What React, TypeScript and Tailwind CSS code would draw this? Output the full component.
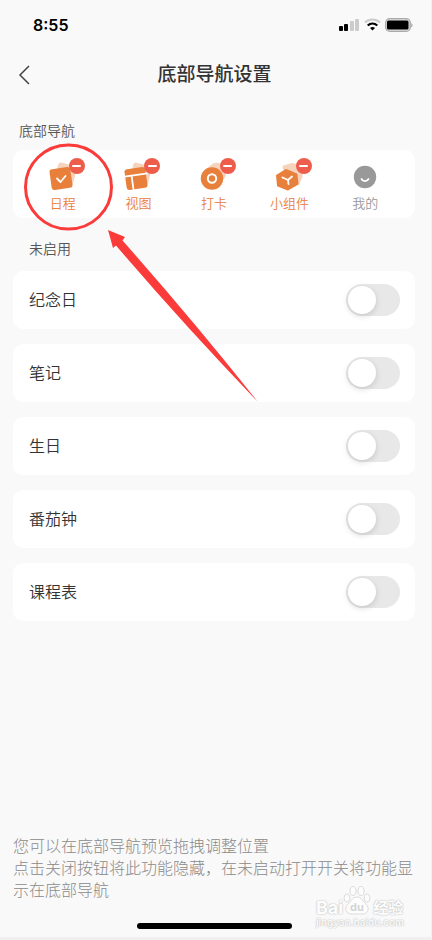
import { useState } from "react";
import type { ReactNode } from "react";

type Tab = { name: string; active: boolean; icon: ReactNode };

const tabs: Tab[] = [
  {
    name: "日程",
    active: true,
    icon: (
      <>
        <rect x="15" y="8" width="19" height="21" rx="3" fill="#f5d3bc" transform="rotate(15 24.5 18.5)" />
        <rect x="9.5" y="12" width="21" height="21" rx="3" fill="#e8803c" transform="rotate(-8 20 22.5)" />
        <path d="M16 22.5l3.500 3.500 5-6" fill="none" stroke="#fff" strokeWidth="1.8" strokeLinecap="round" strokeLinejoin="round" />
      </>
    ),
  },
  {
    name: "视图",
    active: true,
    icon: (
      <>
        <rect x="15" y="8" width="19" height="21" rx="3" fill="#f5d3bc" transform="rotate(15 24.5 18.5)" />
        <g transform="rotate(-8 20 22.5)">
          <rect x="9.5" y="12" width="21" height="21" rx="3" fill="#e8803c" />
          <path d="M9 19h23M16 19v15" fill="none" stroke="#fff" strokeWidth="1.8" />
        </g>
      </>
    ),
  },
  {
    name: "打卡",
    active: true,
    icon: (
      <>
        <path d="M13 14l8-6.500c8-3 16 5 12.500 13L27 30z" fill="#f5d3bc" />
        <circle cx="20" cy="22.5" r="11.2" fill="#e8803c" />
        <circle cx="20" cy="22.5" r="4.2" fill="none" stroke="#fff" strokeWidth="2" />
      </>
    ),
  },
  {
    name: "小组件",
    active: true,
    icon: (
      <>
        <path d="M16 11l8-2.500 9 2 0 10-3 6.500-10-2z" fill="#f5d3bc" stroke="#f5d3bc" strokeWidth="3" strokeLinejoin="round" />
        <path d="M9 19.500l9-5.500 10.500 4.500 1 9.500-9.500 5.500-10-4z" fill="#e8803c" stroke="#e8803c" strokeWidth="2" strokeLinejoin="round" />
        <path d="M14.500 21.500l5.500 2.500 4-3.500M20 24l.5 4" fill="none" stroke="#fff" strokeWidth="1.800" strokeLinecap="round" strokeLinejoin="round" />
      </>
    ),
  },
  {
    name: "我的",
    active: false,
    icon: (
      <>
        <circle cx="22" cy="21" r="11.2" fill="#999" />
        <path d="M18.500 23c1.500 2.700 5.500 2.700 7 0" fill="none" stroke="#fff" strokeWidth="1.8" strokeLinecap="round" />
      </>
    ),
  },
];

const features = ["纪念日", "笔记", "生日", "番茄钟", "课程表"];

function StatusBar() {
  return (
    <div className="flex h-[50px] items-center justify-between pl-[33px] pr-[18px]">
      <span className="font-[Inter] text-base font-semibold text-black">8:55</span>
      <div className="flex items-center gap-1">
        <svg className="h-[14px] w-[21px]" viewBox="0 0 21 14">
          <rect x="0" y="8" width="4" height="5" rx="1" />
          <rect x="5" y="6" width="4" height="7" rx="1" />
          <rect x="11" y="3" width="4" height="10" rx="1" fill="#ccc" />
          <rect x="16" y="1" width="4" height="12" rx="1" fill="#ccc" />
        </svg>
        <svg className="h-[14px] w-[17px]" viewBox="0 0 17 14" fill="none">
          <path d="M1 4.500c4.300-4 10.700-4 15 0" stroke="#ccc" strokeWidth="2.200" />
          <path d="M3.700 7.500c2.800-2.500 6.800-2.500 9.600 0" stroke="#000" strokeWidth="2.200" />
          <path d="M8.500 12.500L6 10c1.500-1.300 3.500-1.300 5 0z" fill="#000" />
        </svg>
        <svg className="h-[14px] w-[28px]" viewBox="0 0 28 14">
          <rect x="0.700" y="0.700" width="24.600" height="12.600" rx="4" fill="#ddd" stroke="#aaa" strokeWidth="1.300" />
          <rect x="2" y="2.500" width="21.500" height="9" rx="1.500" />
          <path d="M26.300 5v4.500c1.600-.7 1.600-3.800 0-4.500z" fill="#999" />
        </svg>
      </div>
    </div>
  );
}

function TabItem({ tab }: { tab: Tab }) {
  return (
    <li className="flex flex-col items-center">
      <div className="relative">
        <svg className="h-9 w-11" viewBox="0 0 44 36">
          {tab.icon}
        </svg>
        {tab.active && (
          <button
            type="button"
            aria-label={`移除${tab.name}`}
            className="absolute right-0 top-[2px] flex size-4 items-center justify-center rounded-full bg-[#ee5d4b]"
          >
            <span className="h-[2px] w-[9px] rounded-full bg-white" />
          </button>
        )}
      </div>
      <span className={`text-[13px] leading-[22px] font-[350] ${tab.active ? "text-[#e8803c]" : "text-[#999]"}`}>
        {tab.name}
      </span>
    </li>
  );
}

function FeatureRow({ name }: { name: string }) {
  const [on, setOn] = useState<boolean>(false);

  return (
    <label className="flex h-[58px] cursor-pointer items-center justify-between rounded-[10px] bg-white pl-4 pr-[15px]">
      <span className="text-base font-[350] text-[#333]">{name}</span>
      <input
        type="checkbox"
        role="switch"
        checked={on}
        onChange={() => setOn((prev) => !prev)}
        className="h-8 w-[54px] cursor-pointer appearance-none rounded-full bg-[#e8e8e8] p-[2px] before:block before:size-7 before:rounded-full before:bg-white before:shadow-[0_2px_6px_rgba(0,0,0,0.15)] before:transition-all checked:bg-[#e8803c] checked:before:translate-x-[22px]"
      />
    </label>
  );
}

function Watermark() {
  return (
    <div className="absolute bottom-[9px] right-[27px] text-[#fdfdfd] [text-shadow:0_0_2px_#bbb,0_0_1px_#ccc]">
      <div className="flex h-[30px] items-end">
        <span className="font-[Inter] text-lg leading-4 font-bold">Bai</span>
        <svg className="h-[30px] w-[28px]" viewBox="0 0 28 30" fill="#fdfdfd" stroke="#dcdcdc">
          <ellipse cx="4" cy="12" rx="3" ry="4" />
          <ellipse cx="10" cy="5" rx="3" ry="4.5" />
          <ellipse cx="18" cy="5" rx="3" ry="4.5" />
          <ellipse cx="24" cy="12" rx="3" ry="4" />
          <path d="M14 11c5 0 5 4 9 7 4 4 2 10-3 10H8c-5 0-7-6-3-10 4-3 4-7 9-7z" />
          <text x="14" y="25" textAnchor="middle" fill="#d4d4d4" stroke="none" className="font-[Inter] text-[11px] font-bold [text-shadow:none]">
            du
          </text>
        </svg>
        <span className="pl-[2px] text-[15px] leading-4 font-bold">经验</span>
      </div>
      <div className="font-[Inter] text-[10px] leading-3 font-medium">jingyan.baidu.com</div>
    </div>
  );
}

function App() {
  return (
    <div className="relative flex min-h-screen flex-col border-r border-b-[3px] border-[#efefef] bg-[#f9f9f9] font-['Inter','Noto_Sans_CJK_SC',sans-serif]">
      <StatusBar />
      <header className="relative flex h-[50px] items-center justify-center pr-[2px]">
        <button type="button" aria-label="返回" className="absolute left-[18px]">
          <svg className="h-5 w-3" viewBox="0 0 12 20" fill="none" stroke="#444" strokeWidth="1.5">
            <path d="M11 1L2 10l9 9" />
          </svg>
        </button>
        <h1 className="text-[19px] font-medium text-[#333]">底部导航设置</h1>
      </header>

      <main className="flex flex-1 flex-col pl-[13px] pr-4">
        <h2 className="mt-5 mb-[9px] pl-[6px] text-sm leading-[21px] font-[350] text-[#555]">底部导航</h2>
        <ul className="grid h-[68px] grid-cols-5 rounded-[10px] bg-white px-3 pt-[6px]">
          {tabs.map((tab) => (
            <TabItem key={tab.name} tab={tab} />
          ))}
        </ul>
        <h2 className="mt-5 mb-3 pl-4 text-sm leading-[21px] font-[350] text-[#555]">未启用</h2>
        <div className="flex flex-col gap-[15px]">
          {features.map((name) => (
            <FeatureRow key={name} name={name} />
          ))}
        </div>
        <p className="mt-auto -mr-1 pb-9 text-base leading-[22px] font-light text-[#8a8a8a]">
          您可以在底部导航预览拖拽调整位置
          <br />
          点击关闭按钮将此功能隐藏，在未启动打开开关将功能显示在底部导航
        </p>
      </main>

      <Watermark />
      <div className="absolute inset-x-0 bottom-2 flex justify-center pr-[2px]">
        <div className="h-[6px] w-[155px] rounded-full bg-black" />
      </div>

      {/* hint pointing at the first tab */}
      <svg className="pointer-events-none absolute left-[22px] top-[141px] h-[264px] w-[240px]" viewBox="22 141 240 264">
        <ellipse cx="68.500" cy="187" rx="43" ry="42" fill="none" stroke="#fb3a3a" strokeWidth="3" />
        <path d="M108 230L125 237 122.500 240.500Q192 319 258 402 184 325 116 245.500L113 248z" fill="#fb3a3a" />
      </svg>
    </div>
  );
}

export default App;
